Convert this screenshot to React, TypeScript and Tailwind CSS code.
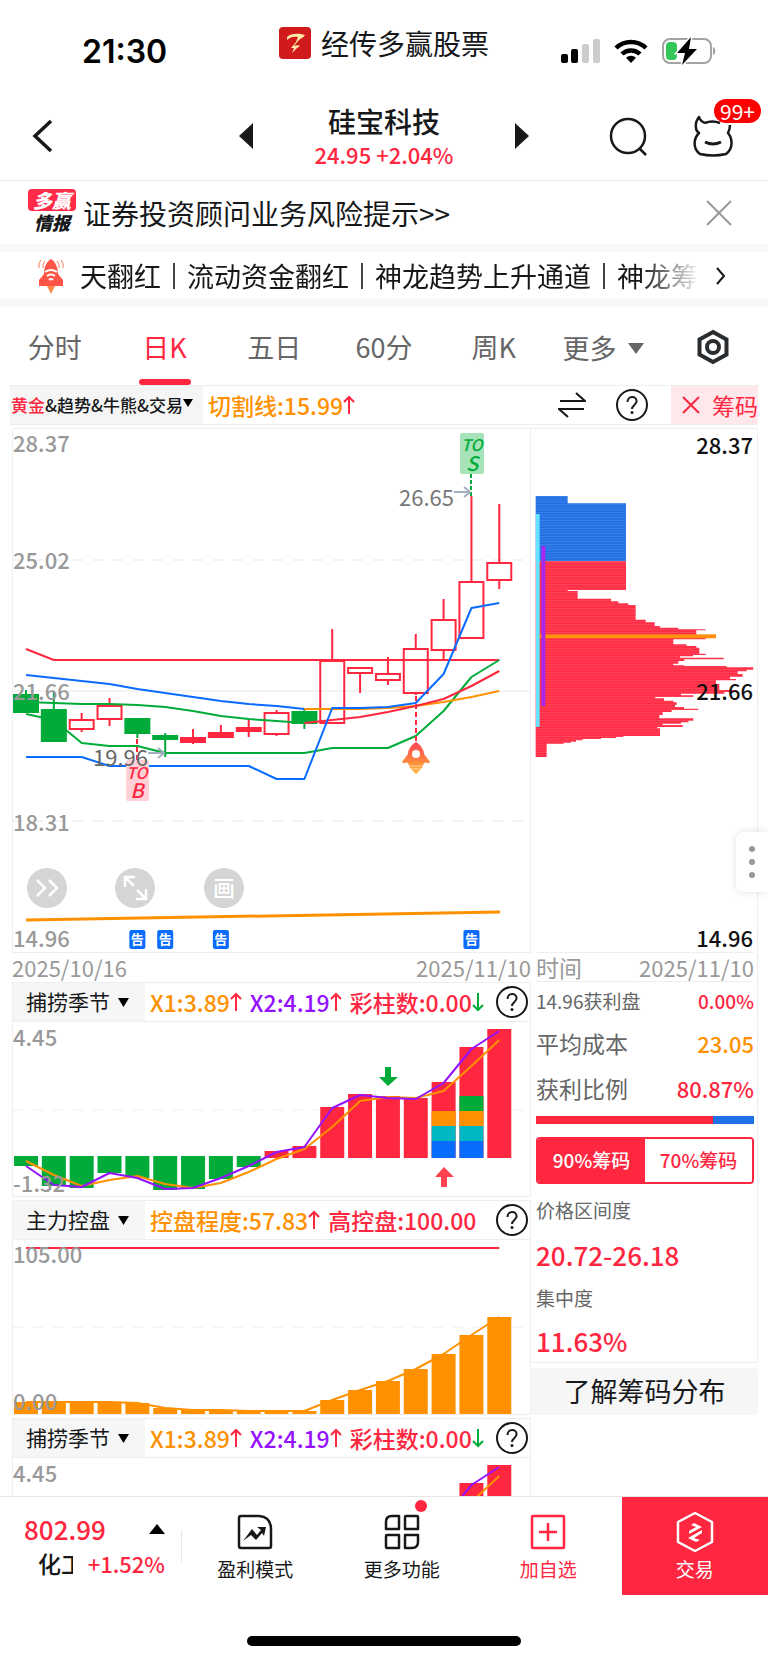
import { useState } from 'react';
import type { ReactNode } from 'react';

const RED = '#ff273f';
const GREEN = '#00ab3a';
const BLUE = '#0a6cff';
const ORANGE = '#ff9100';
const PURPLE = '#9412ff';

type Candle = { top: number; bottom: number; high: number; low: number; kind: 'down' | 'up' | 'flat' };

const candles: Candle[] = [
  { top: 265, bottom: 283, high: 261, low: 284, kind: 'down' },
  { top: 280, bottom: 312, high: 263, low: 312, kind: 'down' },
  { top: 290, bottom: 300, high: 284, low: 303, kind: 'up' },
  { top: 276, bottom: 290, high: 269, low: 297, kind: 'up' },
  { top: 289, bottom: 304, high: 289, low: 309, kind: 'down' },
  { top: 306, bottom: 310, high: 304, low: 328, kind: 'down' },
  { top: 308, bottom: 313, high: 300, low: 315, kind: 'flat' },
  { top: 303, bottom: 308, high: 296, low: 308, kind: 'flat' },
  { top: 298, bottom: 302, high: 290, low: 308, kind: 'flat' },
  { top: 283, bottom: 305, high: 281, low: 307, kind: 'up' },
  { top: 282, bottom: 294, high: 280, low: 300, kind: 'down' },
  { top: 231, bottom: 294, high: 200, low: 294, kind: 'up' },
  { top: 238, bottom: 244, high: 238, low: 264, kind: 'up' },
  { top: 244, bottom: 251, high: 228, low: 256, kind: 'up' },
  { top: 219, bottom: 264, high: 205, low: 266, kind: 'up' },
  { top: 190, bottom: 221, high: 170, low: 230, kind: 'up' },
  { top: 152, bottom: 209, high: 67, low: 209, kind: 'up' },
  { top: 133, bottom: 151, high: 75, low: 160, kind: 'up' },
];

const seasonBars = [144, 164, 166, 151, 156, 168, 167, 157, 145, 129, 124, 85, 72, 74, 76, 60, 25, 7];
const seasonX1 = [139, 153, 164, 158, 154, 162, 166, 161, 150, 137, 127, 105, 79, 75, 76, 69, 44, 18];
const seasonX2 = [144, 163, 165, 151, 156, 167, 166, 156, 144, 130, 125, 86, 73, 76, 77, 61, 27, 9];
const controlBars = [162, 162, 162, 162, 163, 168, 170, 170, 171, 171, 171, 160, 150, 141, 129, 114, 95, 77];

// [top, right edge] of each step of the chip distribution
const chipSteps: [number, number][] = [
  [244, 318], [330, 143], [333, 173], [356, 273], [364, 295], [370, 325], [375, 347], [419, 377], [427, 404],
  [438, 420], [443, 475], [448, 557], [451, 529], [474, 557], [478, 460], [493, 500], [498, 529], [503, 538],
  [521, 557], [525, 519], [529, 480], [533, 611], [538, 493], [543, 475], [551, 460], [556, 493], [558, 620],
  [562, 700], [569, 680], [574, 653], [582, 668], [590, 630], [597, 648], [601, 588], [612, 598], [630, 650],
  [636, 613], [641, 483], [646, 520], [651, 406], [655, 432], [662, 460], [667, 470], [675, 465], [681, 492],
  [686, 535], [690, 455], [696, 428], [705, 418], [715, 520], [722, 505], [727, 483], [731, 428], [735, 488],
  [741, 412], [745, 420], [768, 310], [771, 288], [774, 243], [777, 188], [781, 168], [785, 153], [788, 131],
  [791, 80],
];

const cx = (i: number) => 13 + i * 27.84;
const toPoints = (ys: number[], from = 0) => ys.map((y, i) => `${cx(i + from)},${y}`).join(' ');

function chipPath() {
  let d = 'M47 244';
  chipSteps.forEach(([top, right], i) => {
    const bottom = i + 1 < chipSteps.length ? chipSteps[i + 1][0] : 831;
    d += `L${right} ${top}V${bottom}`;
    if (i + 1 < chipSteps.length) d += `H${chipSteps[i + 1][1]}`;
  });
  return d + 'H47Z';
}

function Line({ ys, from = 0, color }: { ys: number[]; from?: number; color: string }) {
  return <polyline points={toPoints(ys, from)} fill="none" stroke={color} strokeWidth="2" strokeLinejoin="round" />;
}

function Arrow({ down = false }: { down?: boolean }) {
  return (
    <svg viewBox="0 0 12 20" className={`w-3 h-5 ${down ? 'text-[#00ab3a]' : 'text-[#ff273f]'}`} fill="none" stroke="currentColor" strokeWidth="2">
      <path d={down ? 'M6 1v17M1 13l5 5 5-5' : 'M6 19V2M1 7l5-5 5 5'} />
    </svg>
  );
}

function HelpButton() {
  return (
    <button aria-label="帮助" className="w-8 h-8 shrink-0">
      <svg viewBox="0 0 32 32" fill="none" stroke="#16181a" strokeWidth="2">
        <circle cx="16" cy="16" r="15" />
        <path d="M11.5 13c0-3 2-5 4.600-5s4.500 1.800 4.500 4.300c0 3.600-4.600 3.700-4.600 7.700" />
        <circle cx="16" cy="23.500" r="1.500" fill="#16181a" stroke="none" />
      </svg>
    </button>
  );
}

function StatusBar() {
  return (
    <div className="grid grid-cols-3 h-[88px] shrink-0">
      <div className="flex items-center pl-[82px] pt-4 text-[32px] font-semibold text-black font-['Inter',sans-serif]">21:30</div>
      <div className="flex items-center justify-center gap-[10px] pb-[2px] text-[28px] whitespace-nowrap">
        <svg viewBox="0 0 32 32" className="w-8 h-8">
          <rect width="32" height="32" rx="4" fill="#d01a1c" />
          <path d="M8 10c4-4 11-4 18-2-2 3-4 3-6 5l-5 6c3-1 5-1 6 0l-3 2-5 5 2-5h-3l5-6 2-5c-4-1-8 0-11 3z" fill="#ffe9a8" />
        </svg>
        经传多赢股票
      </div>
      <div className="flex items-center justify-end gap-[14px] pr-[52px] pt-[14px]">
        <svg viewBox="0 0 39 24" className="w-[39px] h-6">
          <rect y="15" width="7" height="9" rx="2" />
          <rect x="10" y="10" width="7" height="14" rx="2" />
          <rect x="21" y="5" width="7" height="19" rx="2" fill="#ccc" />
          <rect x="32" width="7" height="24" rx="2" fill="#ccc" />
        </svg>
        <svg viewBox="0 0 34 24" className="w-[34px] h-6" fill="none" stroke="#000" strokeWidth="4.500">
          <path d="M2 9a21.500 21.500 0 0 1 30 0" />
          <path d="M8 15a13 13 0 0 1 18 0" />
          <path d="M17 24l-5-5.200a7.300 7.300 0 0 1 10 0z" fill="#000" stroke="none" />
        </svg>
        <svg viewBox="0 0 54 28" className="w-[54px] h-7">
          <rect x="1" y="2" width="48" height="24" rx="7" fill="none" stroke="#a3a3a3" strokeWidth="2" />
          <path d="M51 10c3 1 3 7 0 8z" fill="#a3a3a3" />
          <rect x="4" y="5" width="11" height="18" rx="4" fill="#33c759" />
          <path d="M29 0L15 16h8l-3 12 15-16h-8z" stroke="#fff" strokeWidth="3" paintOrder="stroke" />
        </svg>
      </div>
    </div>
  );
}

function StockHeader() {
  return (
    <header className="grid grid-cols-[1fr_auto_1fr] items-center h-[93px] pt-1 shrink-0 border-b border-[#ececec]">
      <button aria-label="返回" className="ml-8 w-[22px]">
        <svg viewBox="0 0 22 34" className="w-[22px] h-[34px]" fill="none" stroke="#16181a" strokeWidth="3.500"><path d="M19 2L3 17l16 15" /></svg>
      </button>
      <div className="flex items-center justify-between w-[290px]">
        <button aria-label="上一只">
          <svg viewBox="0 0 14 26" className="w-[14px] h-[26px]"><path d="M14 0v26L0 13z" fill="#16181a" /></svg>
        </button>
        <div className="text-center">
          <h1 className="text-[28px] leading-[36px] font-medium">硅宝科技</h1>
          <p className="text-[22px] leading-[30px] font-medium text-[#ff273f]">24.95 +2.04%</p>
        </div>
        <button aria-label="下一只">
          <svg viewBox="0 0 14 26" className="w-[14px] h-[26px]"><path d="M0 0v26l14-13z" fill="#16181a" /></svg>
        </button>
      </div>
      <div className="flex items-center justify-end gap-[43px] pr-[34px]">
        <button aria-label="搜索">
          <svg viewBox="0 0 40 40" className="w-10 h-10" fill="none" stroke="#16181a" strokeWidth="2.500"><circle cx="19" cy="20" r="17" /><path d="M30 32l7 7" /></svg>
        </button>
        <button aria-label="客服消息" className="relative">
          <svg viewBox="0 0 42 42" className="w-[42px] h-[42px]" fill="none" stroke="#16181a" strokeWidth="2.500" strokeLinejoin="round">
            <path d="M13 8Q8 6 7 2Q3 7 4 13Q4 16 7 18C1 24 1 34 8 39Q21 42 34 39C41 34 41 24 36 18Q38 14 38 10M13 8Q20 5 28 8" />
            <path d="M13 27q8 4 16 0" strokeWidth="3" />
          </svg>
          <span className="absolute left-[22px] -top-4 rounded-full bg-[#ff0000] px-[6px] text-[21px] leading-6 text-white">99+</span>
        </button>
      </div>
    </header>
  );
}

function Notices() {
  return (
    <>
      <div className="flex items-center h-[63px] shrink-0 pl-7 pr-9">
        <div className="w-12 pb-1 text-center text-[18px] leading-[22px] font-black italic">
          <div className="rounded bg-[#ff2b49] text-[19px] text-white">多赢</div>
          <div>情报</div>
        </div>
        <a href="#risk" className="flex-1 pl-[7px] text-[28px]">证券投资顾问业务风险提示&gt;&gt;</a>
        <button aria-label="关闭">
          <svg viewBox="0 0 26 26" className="w-[26px] h-[26px]" fill="none" stroke="#999" strokeWidth="2"><path d="M1 1l24 24M25 1L1 25" /></svg>
        </button>
      </div>
      <div className="flex items-center h-[63px] shrink-0 border-y-8 border-[#f7f7f7] pl-[36px] pr-[42px]">
        <svg viewBox="0 0 30 36" className="w-[30px] h-9 shrink-0">
          <path d="M5 2q-3 3-2 8M9 3Q6 6 7 10M25 2q3 3 2 8M21 3q3 3 2 7" fill="none" stroke="#ff7a55" />
          <path d="M15 1c-5 3-7 9-7 15l-5 6v6h24v-6l-5-6c0-6-2-12-7-15z" fill="#ff5546" />
          <path d="M11 28h8l-4 8z" fill="#ff8a4a" />
          <path d="M9 14q6-4 12 0M11 18q4-3 8 0M13 22q2-2 4 0" fill="none" stroke="#fff" strokeWidth="2" />
        </svg>
        <div className="flex flex-1 min-w-0 items-center gap-3 ml-[14px] mr-5 overflow-hidden whitespace-nowrap text-[27px] leading-[46px] [mask-image:linear-gradient(to_right,black_91%,transparent_101%)]">
          {['天翻红', '流动资金翻红', '神龙趋势上升通道', '神龙筹码'].map((name, i) => (
            <span key={name} className="contents">
              {i > 0 && <i className="w-[2px] h-[26px] shrink-0 bg-[#444]" />}
              <span>{name}</span>
            </span>
          ))}
        </div>
        <svg viewBox="0 0 10 18" className="w-[10px] h-[18px]" fill="none" stroke="#16181a" strokeWidth="2"><path d="M1 1l7 8-7 8" /></svg>
      </div>
    </>
  );
}

function PeriodTabs() {
  const [active, setActive] = useState('日K');
  return (
    <nav className="grid grid-cols-7 h-[78px] shrink-0 text-[27px] text-[#666]">
      {['分时', '日K', '五日', '60分', '周K'].map(t => (
        <button key={t} onClick={() => setActive(t)} className={`flex flex-col items-center justify-between ${active === t ? 'text-[#ff273f]' : ''}`}>
          <span className="h-[72px] pt-[20px]">{t}</span>
          <span className={`w-[52px] h-[6px] rounded-full ${active === t ? 'bg-[#ff273f]' : ''}`} />
        </button>
      ))}
      <button className="flex items-center justify-center gap-3 pt-1">
        更多
        <svg viewBox="0 0 16 11" className="w-4 h-[11px]"><path d="M0 0h16L8 11z" fill="#666" /></svg>
      </button>
      <button aria-label="设置" className="flex items-center justify-center pt-[2px]">
        <svg viewBox="0 0 34 36" className="w-[34px] h-9" fill="none" stroke="#2a2d30" strokeWidth="4"><path d="M17 3l13.500 7.500v15L17 33 3.500 25.500v-15z" /><circle cx="17" cy="18" r="6" /></svg>
      </button>
    </nav>
  );
}

function ToolBar() {
  return (
    <div className="flex items-center h-10 mx-[10px] mb-[3px] border-y border-[#eee]">
      <button className="flex items-center h-full w-[193px] pl-[1px] bg-[#f5f5f5] text-[17px] font-medium whitespace-nowrap">
        <span className="text-[#ff273f]">黄金</span>&amp;趋势&amp;牛熊&amp;交易
        <svg viewBox="0 0 10 8" className="w-[10px] h-2 mb-1"><path d="M0 0h10L5 8z" /></svg>
      </button>
      <div className="flex items-center flex-1 pl-[5px] text-[23px] font-medium text-[#ff9100]">切割线:15.99<Arrow /></div>
      <button aria-label="切换" className="mr-[30px]">
        <svg viewBox="0 0 28 26" className="w-7 h-[26px]" fill="none" stroke="#16181a" strokeWidth="2"><path d="M2 9h25L18 1M26 17H1l9 8" /></svg>
      </button>
      <HelpButton />
      <button className="flex items-center justify-end h-full w-[87px] ml-[23px] gap-3 bg-[#ffe8eb] text-[23px] text-[#ff273f]">
        <svg viewBox="0 0 18 18" className="w-[18px] h-[18px]" fill="none" stroke={RED} strokeWidth="2"><path d="M1 1l16 16M17 1L1 17" /></svg>
        筹码
      </button>
    </div>
  );
}

function KLineChart() {
  return (
    <svg viewBox="0 0 517 523" className="block w-full h-auto">
      <g stroke="#f3f3f3" strokeWidth="2" strokeDasharray="10 10">
        <path d="M0 131h517M0 392h517" />
        <path d="M0 262h517" strokeDasharray="none" />
      </g>
      <Line ys={[220, 231, 231, 231, 231, 231, 231, 231, 231, 231, 231, 231, 231, 231, 231, 231, 231, 231]} color={RED} />
      {candles.map((c, i) => {
        const color = c.kind === 'down' ? GREEN : RED;
        return (
          <g key={i} stroke={color} strokeWidth="2">
            <path d={`M${cx(i)} ${c.high}V${c.top}M${cx(i)} ${c.bottom}V${c.low}`} />
            <rect x={cx(i) - 12} y={c.top + 1} width="24" height={c.bottom - c.top - 1} fill={c.kind === 'up' ? 'none' : color} />
          </g>
        );
      })}
      <Line ys={[246, 249, 252, 255, 260, 264, 268, 272, 275, 277, 280]} color={BLUE} />
      <Line ys={[273, 274, 275, 275, 276, 278, 282, 287, 290, 292, 294]} color={GREEN} />
      <Line ys={[285, 291, 314, 317, 317, 324, 324, 324, 324, 324, 324, 319, 319, 319, 307, 282, 248, 231]} color={GREEN} />
      <Line ys={[280, 280, 280, 279, 277, 273, 268, 262]} from={10} color={ORANGE} />
      <Line ys={[294, 291, 288, 283, 277, 270, 257, 242]} from={10} color={RED} />
      <Line ys={[328, 328, 328, 337, 337, 337, 337, 337, 337, 350, 350, 279, 279, 278, 274, 245, 179, 174]} color={BLUE} />
      <path d="M13 491L487 483" stroke={ORANGE} strokeWidth="3" />

      {/* buy and sell marks */}
      <path d="M124 310v22M403 267v46" stroke={RED} strokeWidth="2" strokeDasharray="5 3" />
      <path d="M458 45v22" stroke={GREEN} strokeWidth="2" strokeDasharray="4 2" />
      <rect x="113" y="331" width="23" height="41" rx="2" fill="#ffd0d5" />
      <rect x="447" y="4" width="24" height="41" rx="2" fill="#a6e3b8" />
      <g fontSize="16" fontWeight="500" fontStyle="italic" textAnchor="middle">
        <text x="124" y="350" fill={RED}>TO</text>
        <text x="124" y="369" fontSize="20" fill={RED}>B</text>
        <text x="459" y="22" fill={GREEN}>TO</text>
        <text x="459" y="42" fontSize="20" fill={GREEN}>S</text>
      </g>
      <defs>
        <linearGradient id="rocket" x2="0" y2="1">
          <stop stopColor="#ff4255" />
          <stop offset="1" stopColor="#ffb52e" />
        </linearGradient>
      </defs>
      <path d="M403 313c-5 3-8 8-8 12l-6 8c0 2 5 0 6 1l2 5 6 6 6-6 2-5c2-1 6 1 6-1l-6-8c0-4-3-9-8-12z" fill="url(#rocket)" />
      <circle cx="403" cy="325" r="4" fill="#fff" />
      <path d="M396 337h14M397 340h12" stroke="#fff" strokeOpacity=".6" />

      <g fontSize="22" fontWeight="500" fill="#999">
        <text x="0" y="23">28.37</text>
        <text x="0" y="140">25.02</text>
        <text x="0" y="271">21.66</text>
        <text x="0" y="402">18.31</text>
        <text x="0" y="518">14.96</text>
        <text x="386" y="77" fontWeight="400" fill="#777">26.65</text>
        <text x="80" y="337" fontWeight="400" fill="#666">19.96</text>
      </g>
      <path d="M441 63h15M451 58l6 5-6 5M135 324h15M145 319l6 5-6 5" fill="none" stroke="#a3adc0" strokeWidth="2" />

      {/* floating chart actions */}
      <g fill="#d5d5d5">
        <circle cx="34" cy="459" r="20" />
        <circle cx="122" cy="459" r="20" />
        <circle cx="211" cy="459" r="20" />
      </g>
      <path d="M24 451l8 8-8 8M36 451l8 8-8 8M112 458v-10h10M112 448l9 9M133 460v10h-10M133 470l-9-9" fill="none" stroke="#fff" strokeWidth="2.500" />
      <text x="211" y="467" fontSize="22" fontWeight="500" fill="#fff" textAnchor="middle">画</text>

      {[4, 5, 7, 16].map(i => (
        <g key={i}>
          <rect x={cx(i) - 8} y="501" width="16" height="19" rx="2" fill={BLUE} />
          <text x={cx(i)} y="515" fontSize="13" fontWeight="700" fill="#fff" textAnchor="middle">告</text>
        </g>
      ))}
    </svg>
  );
}

function SeasonChart() {
  return (
    <svg viewBox="0 0 517 174" className="block w-full h-auto">
      <path d="M0 88h517" stroke="#eee" strokeDasharray="10 10" />
      {seasonBars.map((y, i) => (
        i < 9
          ? <rect key={i} x={cx(i) - 12} y="134" width="24" height={y - 134} fill={GREEN} />
          : <rect key={i} x={cx(i) - 12} y={y} width="24" height={136 - y} fill={RED} />
      ))}
      {[15, 16].map(i => (
        <g key={i}>
          <rect x={cx(i) - 12} y="89" width="24" height="15" fill={ORANGE} />
          <rect x={cx(i) - 12} y="104" width="24" height="15" fill="#00b8c4" />
          <rect x={cx(i) - 12} y="119" width="24" height="17" fill={BLUE} />
        </g>
      ))}
      <rect x={cx(16) - 12} y="74" width="24" height="15" fill={GREEN} />
      <Line ys={seasonX1} color={ORANGE} />
      <Line ys={seasonX2} color={PURPLE} />
      <path d="M372 45h6v10h7l-10 9-9-9h6z" fill={GREEN} />
      <path d="M428 165h6v-10h7l-10-10-9 10h6z" fill="#ff4250" />
      <g fontSize="22" fontWeight="500" fill="#999">
        <text x="0" y="24">4.45</text>
        <text x="0" y="170">-1.32</text>
      </g>
    </svg>
  );
}

function ControlChart() {
  return (
    <svg viewBox="0 0 517 174" className="block w-full h-auto">
      <path d="M0 87h517" stroke="#eee" strokeDasharray="10 10" />
      {controlBars.map((y, i) => <rect key={i} x={cx(i) - 12} y={y} width="24" height={174 - y} fill={ORANGE} />)}
      <Line ys={controlBars} color={ORANGE} />
      <path d={`M13 8H${cx(17)}`} stroke={RED} strokeWidth="2" />
      <g fontSize="22" fontWeight="500" fill="#999">
        <text x="0" y="23">105.00</text>
        <text x="0" y="170">0.00</text>
      </g>
    </svg>
  );
}

function Indicator({ name, legend, children }: { name: string; legend: ReactNode; children: ReactNode }) {
  return (
    <section className="mb-[3px] border-x border-b border-[#eee]">
      <div className="flex items-center h-10 pr-[2px] border-y border-[#eee]">
        <button className="flex items-center gap-2 h-full w-[132px] pl-[13px] bg-[#f6f6f6] text-[21px] whitespace-nowrap">
          {name}
          <svg viewBox="0 0 11 9" className="w-[11px] h-[9px]"><path d="M0 0h11L5.500 9z" /></svg>
        </button>
        <div className="flex flex-1 gap-2 pl-[5px] text-[23px] font-medium whitespace-nowrap">{legend}</div>
        <HelpButton />
      </div>
      {children}
    </section>
  );
}

function SeasonIndicator() {
  return (
    <Indicator
      name="捕捞季节"
      legend={
        <>
          <span className="flex items-center text-[#ff9100]">X1:3.89<Arrow /></span>
          <span className="flex items-center text-[#9412ff]">X2:4.19<Arrow /></span>
          <span className="flex items-center text-[#ff273f]">彩柱数:0.00<Arrow down /></span>
        </>
      }
    >
      <SeasonChart />
    </Indicator>
  );
}

function ChipChart() {
  return (
    <svg viewBox="0 0 226 523" className="block w-full h-auto">
      <defs>
        <pattern id="stripes" width="8" height="8" patternUnits="userSpaceOnUse">
          <rect width="8" height="2" fill="#fff" fillOpacity=".16" />
        </pattern>
      </defs>
      <g transform="translate(-11 51) scale(.3333)">
        <path d="M47 48H143V70H318V244H47Z" fill="#2270e3" />
        <path d={chipPath()} fill="#ff2d45" />
        <path d="M47 48H143V70H318V244H47Z" fill="url(#stripes)" />
        <path d={chipPath()} fill="url(#stripes)" />
        <rect x="48" y="102" width="11" height="639" fill="#64e4ff" />
        <rect x="59" y="463" width="529" height="12" fill="#ff9010" />
        <rect x="64" y="198" width="12" height="480" fill="#a828f0" />
      </g>
      <g fontSize="22" fontWeight="500" textAnchor="end" fill="#111">
        <text x="222" y="25">28.37</text>
        <text x="222" y="271">21.66</text>
        <text x="222" y="518">14.96</text>
      </g>
    </svg>
  );
}

function ChipPanel() {
  const [range, setRange] = useState(90);
  return (
    <aside className="w-[227px] shrink-0">
      <div className="border-t border-r border-b border-[#eee]">
        <ChipChart />
        <div className="ml-[5px] mr-[3px] text-[#666]">
          <div className="flex items-center justify-between h-[30px] border-y border-[#eee] text-[23px] text-[#999]">
            <span>时间</span><span className="text-[22px]">2025/11/10</span>
          </div>
          <div className="flex items-center justify-between h-[38px] text-[19px]">
            <span>14.96获利盘</span><span className="font-medium text-[#ff273f]">0.00%</span>
          </div>
          <div className="flex items-center justify-between h-[46px] text-[23px]">
            <span>平均成本</span><span className="text-[22px] font-medium text-[#ff9100]">23.05</span>
          </div>
          <div className="flex items-center justify-between h-11 text-[23px]">
            <span>获利比例</span><span className="text-[22px] font-medium text-[#ff273f]">80.87%</span>
          </div>
          <div className="flex h-2 mt-[6px] bg-[#1f6fe5]"><div className="w-[81%] bg-[#ff273f]" /></div>
          <div className="grid grid-cols-2 h-[47px] mt-[13px] rounded border-2 border-[#ff273f] overflow-hidden text-[19px] font-medium">
            {[90, 70].map(n => (
              <button key={n} onClick={() => setRange(n)} className={range === n ? 'bg-[#ff273f] text-white' : 'bg-white text-[#ff273f]'}>{n}%筹码</button>
            ))}
          </div>
          <p className="mt-[6px] text-[19px] leading-10">价格区间度</p>
          <p className="text-[26px] leading-[50px] font-medium text-[#ff273f]">20.72-26.18</p>
          <p className="text-[19px] leading-9">集中度</p>
          <p className="pt-1 text-[26px] leading-[42px] font-medium text-[#ff273f]">11.63%</p>
        </div>
      </div>
      <button className="w-full h-[47px] mt-[5px] rounded bg-[#f6f6f6] text-[27px]">了解筹码分布</button>
    </aside>
  );
}

function BottomNav() {
  return (
    <footer className="shrink-0 h-[167px] border-t border-[#e6e6e6] bg-white">
      <div className="flex h-[98px]">
        <div className="flex flex-col justify-center w-[182px] shrink-0 pl-6 pr-[17px] pt-[2px]">
          <div className="flex items-center justify-between text-[26px] leading-8 font-medium text-[#ff273f]">
            802.99
            <svg viewBox="0 0 16 10" className="w-4 h-[10px]"><path d="M8 0l8 10H0z" /></svg>
          </div>
          <div className="flex items-center justify-between pl-[14px] text-[22px] leading-9 font-medium">
            <span className="w-[35px] overflow-hidden whitespace-nowrap text-[23px]">化工</span>
            <span className="text-[#ff273f]">+1.52%</span>
          </div>
        </div>
        <div className="self-center w-px h-8 -ml-px bg-[#e5e5e5]" />
        <div className="grid grid-cols-4 flex-1 text-[19px]">
          <button className="flex flex-col items-center justify-center gap-[5px] pt-[5px]">
            <svg viewBox="0 0 36 36" className="w-9 h-9" fill="none" stroke="#16181a" strokeWidth="2.500">
              <path d="M4 2h18q12 1 12 13v17q0 2-2 2H4q-2 0-2-2V4q0-2 2-2z" />
              <path d="M6 27l9-12 5 6 4-5-4-3h9l-2 9-2-3-6 7-5-5z" fill="#16181a" stroke="none" />
            </svg>
            盈利模式
          </button>
          <button className="flex flex-col items-center justify-center gap-[5px] pt-[5px]">
            <span className="relative">
              <svg viewBox="0 0 36 36" className="w-9 h-9" fill="none" stroke="#16181a" strokeWidth="2.500">
                <path d="M15 2v13H2V8q0-6 6-6zM21 3q0-1 1-1h11q1 0 1 1v12H21zM2 22q0-1 1-1h12v13H3q-1 0-1-1zM21 21h13v7q0 6-6 6h-7z" strokeLinejoin="round" />
              </svg>
              <i className="absolute -top-[14px] -right-[7px] w-3 h-3 rounded-full bg-[#ff273f]" />
            </span>
            更多功能
          </button>
          <button className="flex flex-col items-center justify-center gap-[5px] pt-[5px] text-[#ff273f]">
            <svg viewBox="0 0 36 36" className="w-9 h-9" fill="none" stroke="currentColor" strokeWidth="2.500"><rect x="2" y="2" width="32" height="32" rx="1" /><path d="M9 18h18M18 9v18" /></svg>
            加自选
          </button>
          <button className="flex flex-col items-center justify-center gap-[2px] pt-[5px] bg-[#ff273f] text-white">
            <svg viewBox="0 0 38 42" className="w-[38px] h-[42px] -mt-[3px]" fill="none" stroke="#fff" strokeWidth="2.500" strokeLinejoin="round">
              <path d="M19 2l17 9v20l-17 9-17-9V11z" />
              <path d="M18 12l8 4-13 7v-3l7-4-5-2zM20 31l-8-4 14-8v3l-8 5 6 2z" fill="#fff" stroke="none" />
            </svg>
            交易
          </button>
        </div>
      </div>
      <div className="w-[274px] h-[10px] mx-auto mt-[41px] rounded-full bg-black" />
    </footer>
  );
}

export default function App() {
  return (
    <div className="flex flex-col h-screen bg-white text-[#16181a] font-['Noto_Sans_CJK_SC',sans-serif]">
      <StatusBar />
      <StockHeader />
      <Notices />
      <main className="flex-1 min-h-0 overflow-hidden">
        <PeriodTabs />
        <ToolBar />
        <div className="relative flex pl-3 pr-[10px]">
          <div className="flex-1 min-w-0">
            <div className="border border-[#eee]">
              <KLineChart />
            </div>
            <div className="flex items-center justify-between h-[29px] text-[22px] text-[#999]">
              <span>2025/10/16</span><span>2025/11/10</span>
            </div>
            <SeasonIndicator />
            <Indicator
              name="主力控盘"
              legend={
                <>
                  <span className="flex items-center text-[#ff9100]">控盘程度:57.83<Arrow /></span>
                  <span className="text-[#ff273f]">高控盘:100.00</span>
                </>
              }
            >
              <ControlChart />
            </Indicator>
            <SeasonIndicator />
          </div>
          <ChipPanel />
          <button aria-label="更多操作" className="absolute right-0 top-[404px] flex flex-col items-center justify-center gap-[7px] w-8 h-[60px] rounded-l-lg bg-white shadow-[0_0_8px_rgba(0,0,0,0.12)]">
            <i className="w-[6px] h-[6px] rounded-full bg-[#999]" />
            <i className="w-[6px] h-[6px] rounded-full bg-[#999]" />
            <i className="w-[6px] h-[6px] rounded-full bg-[#999]" />
          </button>
        </div>
      </main>
      <BottomNav />
    </div>
  );
}
